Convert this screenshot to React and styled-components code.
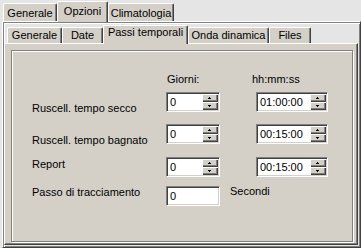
import React from 'react';
import styled, { createGlobalStyle } from 'styled-components';

const Global = createGlobalStyle`
  html, body { margin: 0; padding: 0; background: #e5e5e5; }
  body {
    width: 361px; height: 248px; overflow: hidden;
    font-family: "Liberation Sans", Arial, sans-serif;
    font-size: 11px; line-height: 13px; color: #000;
  }
`;

const Window = styled.div`
  width: 361px;
  height: 248px;
  display: flex;
  flex-direction: column;
  background: #e5e5e5;
`;

const TabStrip = styled.div`
  display: flex;
  align-items: flex-end;
  height: ${p => p.$h}px;
  padding-left: ${p => p.$pl}px;
  flex-shrink: 0;
`;

const Tab = styled.div`
  box-sizing: border-box;
  position: relative;
  z-index: ${p => (p.$active ? 2 : 1)};
  width: ${p => p.$w}px;
  height: ${p => p.$h}px;
  margin-bottom: ${p => (p.$active ? -1 : 0)}px;
  padding-top: ${p => p.$pt}px;
  text-align: center;
  white-space: nowrap;
  background: #d4d0c8;
  border-top: 1px solid #fff;
  border-left: 1px solid #fff;
  border-right: 1px solid #404040;
  border-radius: 2px 2px 0 0;
  box-shadow: inset -1px 0 #808080;
`;

const OuterPanel = styled.div`
  box-sizing: border-box;
  margin-left: 2px;
  width: 359px;
  flex: 1;
  border-top: 1px solid #fff;
  border-left: 1px solid #fff;
  border-right: 1px solid #404040;
  border-bottom: 1px solid #404040;
  box-shadow: inset 1px 1px #808080, inset 2px 2px #fff, inset -1px -1px #808080;
  display: flex;
  flex-direction: column;
  padding-left: 1px;
`;

const InnerPanel = styled.div`
  box-sizing: border-box;
  width: 354px;
  height: 202px;
  background: #d4d0c8;
  border-top: 1px solid #fff;
  border-left: 1px solid #fff;
  border-right: 1px solid #404040;
  border-bottom: 1px solid #404040;
  box-shadow: inset -1px -1px #808080;
  padding: 6px 0 0 6px;
`;

const Group = styled.div`
  box-sizing: border-box;
  width: 342px;
  height: 192px;
  border: 1px solid #808080;
  box-shadow: inset 1px 1px #fff, 1px 1px #fff;
  padding: 22px 0 0 20px;
  display: flex;
  flex-direction: column;
`;

const Row = styled.div`
  display: flex;
  align-items: flex-start;
  margin-top: ${p => p.$mt}px;
`;

const Label = styled.div`
  width: ${p => p.$w}px;
  margin-top: ${p => p.$dy || 0}px;
  margin-left: ${p => p.$dx || 0}px;
  white-space: nowrap;
  flex-shrink: 0;
`;

const Field = styled.div`
  box-sizing: border-box;
  width: ${p => p.$w}px;
  height: 20px;
  margin-left: ${p => p.$ml || 0}px;
  flex-shrink: 0;
  display: flex;
  padding: 1px;
  background: #fff;
  border-top: 1px solid #808080;
  border-left: 1px solid #808080;
  border-bottom: 1px solid #fff;
  border-right: 1px solid #fff;
  box-shadow: inset 1px 1px #404040, inset -1px -1px #d4d0c8;
`;

const Value = styled.div`
  flex: 1;
  padding-left: 2px;
  display: flex;
  align-items: center;
  white-space: nowrap;
`;

const Spinner = styled.div`
  width: 16px;
  display: flex;
  flex-direction: column;
`;

const SpinButton = styled.div`
  box-sizing: border-box;
  height: 8px;
  background: #d4d0c8;
  box-shadow: inset 1px 1px #fff, inset -1px -1px #404040, inset -2px -2px #808080;
  display: flex;
  align-items: center;
  justify-content: center;
  padding-right: 1px;

  svg { display: block; }
`;

const Arrow = ({ up }) => (
  <svg width="3" height="2" viewBox="0 0 3 2" shapeRendering="crispEdges">
    {up ? (
      <>
        <rect x="1" y="0" width="1" height="1" fill="#000" />
        <rect x="0" y="1" width="3" height="1" fill="#000" />
      </>
    ) : (
      <>
        <rect x="0" y="0" width="3" height="1" fill="#000" />
        <rect x="1" y="1" width="1" height="1" fill="#000" />
      </>
    )}
  </svg>
);

const SpinBox = ({ value, w, ml }) => (
  <Field $w={w} $ml={ml}>
    <Value>{value}</Value>
    <Spinner>
      <SpinButton><Arrow up /></SpinButton>
      <SpinButton><Arrow /></SpinButton>
    </Spinner>
  </Field>
);

const TextBox = ({ value, w }) => (
  <Field $w={w}>
    <Value>{value}</Value>
  </Field>
);

const outerTabs = [
  { label: 'Generale', w: 54 },
  { label: 'Opzioni', w: 51, active: true },
  { label: 'Climatologia', w: 66 },
];

const innerTabs = [
  { label: 'Generale', w: 55 },
  { label: 'Date', w: 41 },
  { label: 'Passi temporali', w: 85, active: true },
  { label: 'Onda dinamica', w: 81 },
  { label: 'Files', w: 42 },
];

const rows = [
  { label: 'Ruscell. tempo secco', dy: 10, mt: 6, days: '0', time: '01:00:00' },
  { label: 'Ruscell. tempo bagnato', dy: 10, mt: 9, days: '0', time: '00:15:00' },
  { label: 'Report', dy: 1, mt: 10, days: '0', time: '00:15:00' },
];

export default function App() {
  return (
    <>
      <Global />
      <Window>
        <TabStrip $h={21} $pl={3}>
          {outerTabs.map(t => (
            <Tab key={t.label} $w={t.w} $h={t.active ? 21 : 18} $pt={3} $active={t.active}>
              {t.label}
            </Tab>
          ))}
        </TabStrip>
        <OuterPanel>
          <TabStrip $h={21} $pl={3}>
            {innerTabs.map(t => (
              <Tab key={t.label} $w={t.w} $h={t.active ? 19 : 16} $pt={t.active ? 0 : 1} $active={t.active}>
                {t.label}
              </Tab>
            ))}
          </TabStrip>
          <InnerPanel>
            <Group>
              <Row $mt={0}>
                <Label $w={85} $dx={135}>Giorni:</Label>
                <Label $w={60}>hh:mm:ss</Label>
              </Row>
              {rows.map(r => (
                <Row key={r.label} $mt={r.mt}>
                  <Label $w={134} $dy={r.dy}>{r.label}</Label>
                  <SpinBox value={r.days} w={54} />
                  <SpinBox value={r.time} w={72} ml={36} />
                </Row>
              ))}
              <Row $mt={9}>
                <Label $w={134}>Passo di tracciamento</Label>
                <TextBox value="0" w={54} />
                <Label $w={60} $dx={10} $dy={-1}>Secondi</Label>
              </Row>
            </Group>
          </InnerPanel>
        </OuterPanel>
      </Window>
    </>
  );
}
